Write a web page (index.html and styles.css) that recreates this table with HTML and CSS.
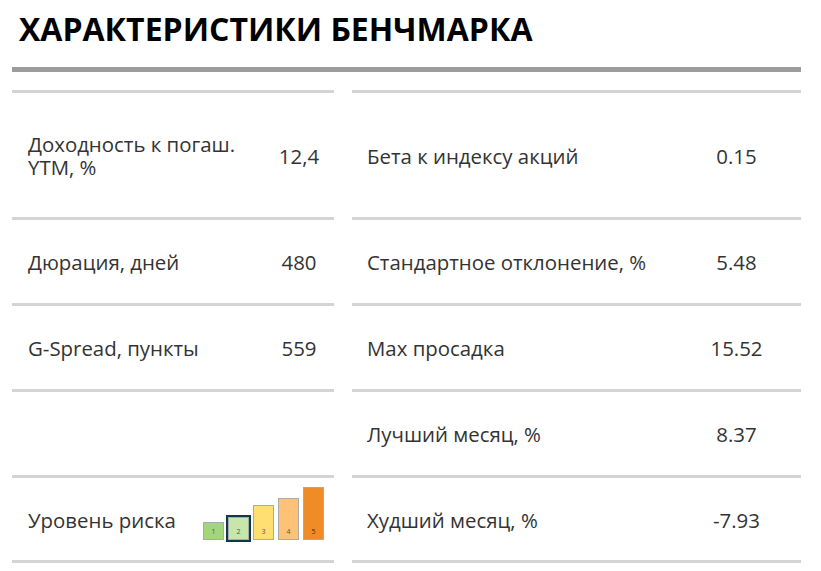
FILE: index.html
```html
<!DOCTYPE html>
<html lang="ru">
<head>
<meta charset="utf-8">
<title>Характеристики бенчмарка</title>
<link rel="stylesheet" href="styles.css">
</head>
<body>
<div class="page">
  <h1 class="title">ХАРАКТЕРИСТИКИ БЕНЧМАРКА</h1>
  <div class="rule"></div>
  <div class="tables">
    <div class="table table-left">
      <div class="row row-tall">
        <div class="label">Доходность к погаш. YTM, %</div>
        <div class="value">12,4</div>
      </div>
      <div class="row">
        <div class="label">Дюрация, дней</div>
        <div class="value">480</div>
      </div>
      <div class="row">
        <div class="label">G-Spread, пункты</div>
        <div class="value">559</div>
      </div>
      <div class="row">
        <div class="label"></div>
        <div class="value"></div>
      </div>
      <div class="row row-risk">
        <div class="label">Уровень риска</div>
        <div class="risk">
          <div class="bar bar-1">1</div>
          <div class="bar bar-2 bar-active">2</div>
          <div class="bar bar-3">3</div>
          <div class="bar bar-4">4</div>
          <div class="bar bar-5">5</div>
        </div>
      </div>
    </div>
    <div class="table table-right">
      <div class="row row-tall">
        <div class="label">Бета к индексу акций</div>
        <div class="value">0.15</div>
      </div>
      <div class="row">
        <div class="label">Стандартное отклонение, %</div>
        <div class="value">5.48</div>
      </div>
      <div class="row">
        <div class="label">Max просадка</div>
        <div class="value">15.52</div>
      </div>
      <div class="row">
        <div class="label">Лучший месяц, %</div>
        <div class="value">8.37</div>
      </div>
      <div class="row">
        <div class="label">Худший месяц, %</div>
        <div class="value">-7.93</div>
      </div>
    </div>
  </div>
</div>
</body>
</html>
```
FILE: styles.css
```css
* { box-sizing: border-box; }
html, body { margin: 0; padding: 0; background: #fff; }
body {
  font-family: "Open Sans", "Noto Sans", "DejaVu Sans", sans-serif;
  color: #333;
}
.page {
  width: 789px;
  margin-left: 12px;
}
.title {
  margin: 0;
  padding: 8px 0 0 7px;
  font-size: 32px;
  font-weight: 700;
  line-height: 42px;
  color: #000;
  letter-spacing: 0;
}
.rule {
  margin-top: 17px;
  height: 5px;
  background: #9c9c9c;
}
.tables {
  display: flex;
  gap: 18px;
  margin-top: 18px;
}
.table-left { width: 322px; }
.table-right { width: 449px; }
.row {
  display: flex;
  align-items: center;
  height: 86px;
  padding-top: 2px;
  border-top: 3px solid #d4d4d4;
  font-size: 20.4px;
  line-height: 23px;
}
.row:last-child {
  height: 88px;
  border-bottom: 3px solid #d4d4d4;
}
.row-tall { height: 127px; }
.label { flex: 1; }
.table-left .label { padding: 0 16px; }
.table-right .label { padding: 0 15px; }
.table-left .value { width: 70px; text-align: center; }
.table-right .value { width: 129px; text-align: center; }
.risk {
  display: flex;
  align-items: flex-end;
  gap: 4px;
  margin-right: 10px;
  margin-top: 0;
  margin-bottom: 13px;
  height: 53px;
}
.bar {
  width: 21px;
  border: 1px solid #aaa;
  display: flex;
  align-items: flex-end;
  justify-content: center;
  font-size: 7px;
  line-height: 7px;
  padding-bottom: 4px;
  color: #555;
}
.bar-1 { height: 18px; background: #a3d67b; }
.bar-2 { height: 23px; background: #c6e7a9; }
.bar-3 { height: 35px; background: #ffde72; }
.bar-4 { height: 42px; background: #fdc276; }
.bar-5 { height: 53px; background: #ef8c25; color: #5a2a00; }
.bar-active {
  border: 1px solid #aaa;
  box-shadow: 0 0 0 2px #0d3c48;
}
```
